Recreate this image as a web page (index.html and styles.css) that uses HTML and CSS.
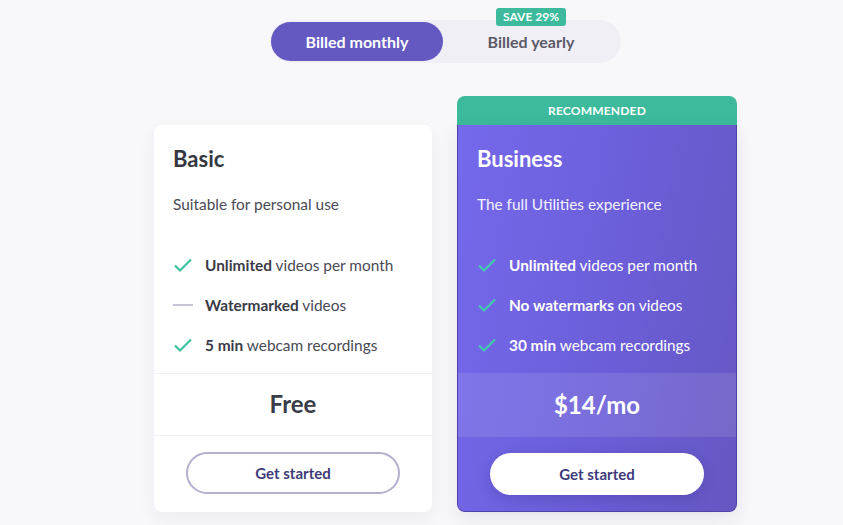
FILE: index.html
```html
<!DOCTYPE html>
<html>
<head>
<meta charset="utf-8">
<link rel="stylesheet" href="styles.css">
</head>
<body>
<div class="page">
  <div class="toggle">
    <button class="opt active">Billed monthly</button>
    <button class="opt yearly">Billed yearly<span class="save">SAVE 29%</span></button>
  </div>
  <div class="plans">
    <div class="card basic">
      <div class="head">
        <h2 class="title">Basic</h2>
        <p class="sub">Suitable for personal use</p>
      </div>
      <ul class="features">
        <li><svg class="ic" viewBox="0 0 20 16"><path d="M2 8.5l5 5L18 2.5" fill="none" stroke="#3cc29e" stroke-width="2.2"/></svg><span><b>Unlimited</b> videos per month</span></li>
        <li><svg class="ic" viewBox="0 0 20 16"><path d="M0 8h20" fill="none" stroke="#c6c4d6" stroke-width="2.2"/></svg><span><b>Watermarked</b> videos</span></li>
        <li><svg class="ic" viewBox="0 0 20 16"><path d="M2 8.5l5 5L18 2.5" fill="none" stroke="#3cc29e" stroke-width="2.2"/></svg><span><b>5 min</b> webcam recordings</span></li>
      </ul>
      <div class="price">Free</div>
      <div class="cta"><button class="btn outline">Get started</button></div>
    </div>
    <div class="rec">
      <div class="badge">RECOMMENDED</div>
      <div class="card business">
        <div class="head">
          <h2 class="title">Business</h2>
          <p class="sub">The full Utilities experience</p>
        </div>
        <ul class="features">
          <li><svg class="ic" viewBox="0 0 20 16"><path d="M2 8.5l5 5L18 2.5" fill="none" stroke="#44c9b0" stroke-width="2.2"/></svg><span><b>Unlimited</b> videos per month</span></li>
          <li><svg class="ic" viewBox="0 0 20 16"><path d="M2 8.5l5 5L18 2.5" fill="none" stroke="#44c9b0" stroke-width="2.2"/></svg><span><b>No watermarks</b> on videos</span></li>
          <li><svg class="ic" viewBox="0 0 20 16"><path d="M2 8.5l5 5L18 2.5" fill="none" stroke="#44c9b0" stroke-width="2.2"/></svg><span><b>30 min</b> webcam recordings</span></li>
        </ul>
        <div class="price">$14/mo</div>
        <div class="cta"><button class="btn solid">Get started</button></div>
      </div>
    </div>
  </div>
</div>
</body>
</html>
```
FILE: styles.css
```css
* { box-sizing: border-box; }
html, body { margin: 0; padding: 0; }
body {
  background: #f8f8fb;
  font-family: Lato, "Noto Sans", sans-serif;
  color: #4a4a56;
  height: 525px;
  overflow: hidden;
}
.page {
  width: 583px;
  margin-left: 154px;
  padding-top: 20px;
}
.toggle {
  width: 351px;
  height: 43px;
  margin: 0 auto;
  background: #f0eff6;
  border-radius: 22px;
  display: flex;
  align-items: center;
  padding: 0 2px 0 1px;
}
.opt {
  border: 0;
  background: transparent;
  font-family: inherit;
  font-size: 16px;
  font-weight: 700;
  height: 39px;
  border-radius: 20px;
  cursor: pointer;
  padding: 0;
}
.opt.active {
  width: 172px;
  background: #6459c1;
  color: #fff;
}
.opt.yearly {
  flex: 1;
  color: #5b5966;
  position: relative;
}
.save {
  position: absolute;
  top: -14px;
  left: 50%;
  transform: translateX(-50%);
  background: #3cba9b;
  color: #fff;
  font-size: 12px;
  font-weight: 700;
  line-height: 18px;
  padding: 0 7px;
  border-radius: 3px;
  white-space: nowrap;
}
.plans {
  display: flex;
  align-items: flex-end;
  gap: 25px;
  margin-top: 33px;
}
.card {
  background: #fff;
  border-radius: 8px;
  box-shadow: 0 6px 18px rgba(40, 40, 90, 0.06);
  overflow: hidden;
}
.basic { width: 278px; height: 387px; }
.head { padding: 20px 19px 0; }
.title {
  margin: 0;
  font-size: 22px;
  line-height: 28px;
  font-weight: 700;
  color: #343741;
}
.sub {
  margin: 20px 0 0;
  font-size: 15.4px;
  line-height: 22px;
}
.features {
  list-style: none;
  margin: 30px 0 8px;
  padding: 0 19px;
}
.features li {
  height: 40px;
  display: flex;
  align-items: center;
  font-size: 15.4px;
}
.features b { color: #3a3b46; }
.ic { width: 20px; height: 16px; margin-right: 12px; flex: none; }
.price {
  height: 63px;
  border-top: 1px solid #f1f1f5;
  border-bottom: 1px solid #f1f1f5;
  display: flex;
  align-items: center;
  justify-content: center;
  font-size: 24px;
  font-weight: 700;
  color: #3a3d48;
  padding-bottom: 2px;
}
.cta {
  padding-top: 16px;
  display: flex;
  justify-content: center;
}
.btn {
  width: 214px;
  height: 42px;
  border-radius: 21px;
  font-family: inherit;
  font-size: 15px;
  font-weight: 700;
  color: #3d3a7a;
  cursor: pointer;
  padding-bottom: 2px;
}
.btn.outline { background: #fff; border: 2px solid #b3b0cf; }
.btn.solid { background: #fff; border: 0; box-shadow: 0 4px 14px rgba(30, 20, 90, 0.18); }
.rec { width: 280px; }
.badge {
  height: 29px;
  background: #3cba9b;
  border-radius: 8px 8px 0 0;
  color: #fff;
  font-size: 12px;
  font-weight: 700;
  display: flex;
  align-items: center;
  justify-content: center;
  letter-spacing: 0.2px;
}
.business {
  height: 387px;
  border: 1px solid #4d42a8;
  border-top: 0;
  border-radius: 0 0 8px 8px;
  background: linear-gradient(100deg, #7569ec 0%, #6a5dd6 60%, #6558c2 100%);
  color: #fff;
  box-shadow: 0 6px 18px rgba(40, 40, 90, 0.1);
}
.business .title, .business .features b { color: #fff; }
.business .sub { color: #f3f2ff; }
.business .price {
  background: rgba(255, 255, 255, 0.1);
  border: 0;
  color: #fff;
  height: 64px;
}
.business .cta { padding-top: 16px; }
```
